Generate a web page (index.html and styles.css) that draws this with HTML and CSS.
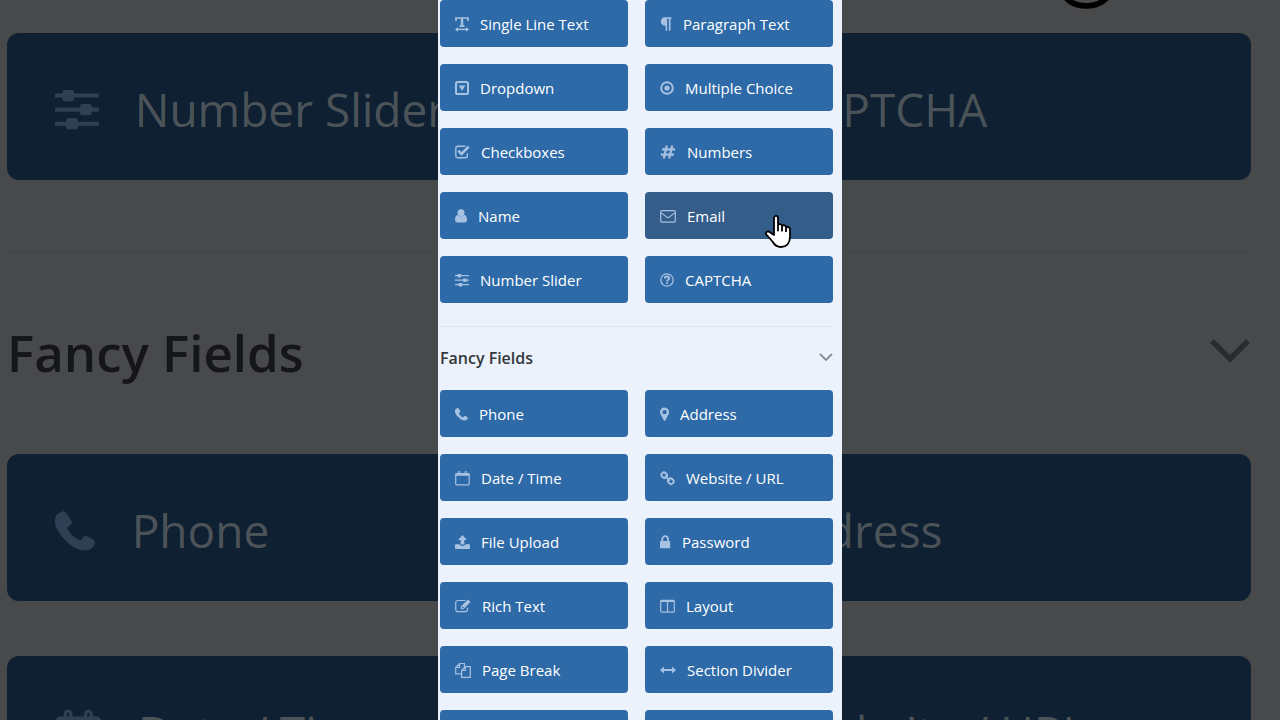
FILE: index.html
```html
<!DOCTYPE html>
<html lang="en">
<head>
  <meta charset="UTF-8" />
  <title>Form Fields</title>
  <link rel="stylesheet" href="styles.css">
</head>
<body>

  <!-- icon shapes, all 16 units tall -->
  <svg class="sprite" aria-hidden="true">
    <defs>
      <g id="text-width">
        <path class="line" stroke-width="1.7" d="M1 5V2h12v3M4.5 10.2h5" />
        <path class="line" stroke-width="2.4" d="M7 2v8.2" />
        <path class="line" stroke-width="1.5" d="M2 13.4h10" />
        <path d="M0 13.4l3-2.4v4.8zM14 13.4l-3-2.4v4.8z" />
      </g>
      <path id="paragraph" d="M11.5 1.3H5A4.2 4.2 0 0 0 5 9.7h.6v5h1.6V2.7h1.7v12h1.6v-12h1z" />
      <g id="caret-square">
        <rect class="line" stroke-width="2" x="1" y="2" width="12" height="12" rx="1.6" />
        <path d="M3.6 5.4h6.8L7 10.8z" />
      </g>
      <g id="dot-circle">
        <circle class="line" stroke-width="2" cx="7" cy="8" r="5.8" />
        <circle cx="7" cy="8" r="2.6" />
      </g>
      <g id="check-square">
        <path class="line" stroke-width="1.4" d="M10.4 2.3H2.8A2 2 0 0 0 .8 4.3v7.4a2 2 0 0 0 2 2h7.6a2 2 0 0 0 2-2V9.3" />
        <path class="line" stroke-width="2.6" d="M3.3 6.6L6.6 9.9l7-7.2" />
      </g>
      <path id="hashtag" class="line" stroke-width="2.2" d="M6.8 1.5L3.8 14.5M12.2 1.5L9.2 14.5M2 5.4h13.2M.8 10.6H14" />
      <g id="user">
        <circle cx="6" cy="4.7" r="3.5" />
        <path d="M2.6 6.8C.7 7.4 0 9.7 0 11.8c0 1.6.9 2.6 2.3 2.6h7.4c1.4 0 2.3-1 2.3-2.6 0-2.1-.7-4.4-2.6-5A4.6 4.6 0 0 1 6 8.6a4.6 4.6 0 0 1-3.4-1.8z" />
      </g>
      <g id="envelope">
        <rect class="line" stroke-width="1.2" x=".7" y="2.7" width="14.6" height="11.4" rx="1" />
        <path class="line" stroke-width="1.2" d="M1 4.6l5.4 4.3q1.6 1.2 3.2 0L15 4.6" />
      </g>
      <g id="sliders">
        <path class="line" stroke-width="1.3" d="M0 3.7h14M0 8.2h14M0 12.7h14" />
        <rect x="2.4" y="1.9" width="3.7" height="3.6" rx=".7" />
        <rect x="8" y="6.4" width="3.7" height="3.6" rx=".7" />
        <rect x="3.6" y="10.9" width="3.7" height="3.6" rx=".7" />
      </g>
      <g id="question-circle">
        <circle class="line" stroke-width="1.3" cx="7" cy="8" r="6.2" />
        <path class="line" stroke-width="1.8" d="M4.8 6.5c.1-1.4 1-2 2.2-2 1.3 0 2.2.7 2.2 1.8 0 1.5-2.1 1.5-2.1 3.1" />
        <rect x="6.2" y="10.3" width="1.8" height="1.7" />
      </g>
      <path id="phone" d="M2.9 2c-.4-.1-2.3.7-2.6 1.6-.9 2 .1 4.2 1.9 6.5 1.9 2.3 4.2 4.1 6.5 4.4 1.4.2 2.8-.3 3.5-1.1.5-.6.7-1.5.5-1.9-.2-.5-2.6-1.7-3-1.7-.6 0-1.2 1.5-1.7 1.5-.9 0-3.9-2.9-4-3.9 0-.5 1.4-1.2 1.4-1.8C5.4 5.1 3.5 2 2.9 2z" />
      <path id="map-marker" fill-rule="evenodd" d="M4.6 1.5C2 1.5 0 3.5 0 6c0 .8.2 1.5.5 2.1l3.2 6.2c.4.8 1.4.8 1.8 0l3.2-6.2c.3-.6.5-1.3.5-2.1 0-2.5-2-4.5-4.6-4.5zm0 2.4a2.2 2.2 0 1 1 0 4.4 2.2 2.2 0 0 1 0-4.4z" />
      <g id="calendar">
        <rect class="line" stroke-width="1.2" x=".7" y="3.6" width="13.5" height="11.2" rx="1" />
        <path d="M.7 3.5h13.5v2.3H.7z" />
        <rect class="line" stroke-width="1" x="3.3" y="1.3" width="1.8" height="3.5" rx=".9" />
        <rect class="line" stroke-width="1" x="9.8" y="1.3" width="1.8" height="3.5" rx=".9" />
      </g>
      <g id="link">
        <rect class="line" stroke-width="1.9" x="1.4" y="2.7" width="5.6" height="5" rx="2.2" transform="rotate(45 4.2 5.2)" />
        <rect class="line" stroke-width="1.9" x="8" y="8.7" width="5.6" height="5" rx="2.2" transform="rotate(45 10.8 11.2)" />
        <path class="line" stroke-width="1.7" d="M5 6l5 4.6" />
      </g>
      <g id="upload">
        <path d="M7.5 1L12 6H9.3v4.5H5.7V6H3z" />
        <path d="M1 10.2h3.5c.3 1.1 1.5 1.7 3 1.7s2.7-.6 3-1.7H14c.6 0 1 .4 1 1v2.7c0 .6-.4 1-1 1H1c-.6 0-1-.4-1-1v-2.7c0-.6.4-1 1-1z" />
      </g>
      <g id="lock">
        <path class="line" stroke-width="1.8" d="M2.3 8V5a2.8 2.8 0 0 1 5.6 0v3" />
        <rect x="0" y="7" width="10.2" height="7.3" rx=".8" />
      </g>
      <g id="pencil-square">
        <path class="line" stroke-width="1.2" d="M10.3 2.5H3A2.3 2.3 0 0 0 .7 4.8v6.6a2.3 2.3 0 0 0 2.3 2.3h7.2a2.3 2.3 0 0 0 2.3-2.3V9.8" />
        <path fill-rule="evenodd" d="M12.9 1.5l2.6 2.5-7 7.2H5.8V8.5zM7.1 9.1v1.1h1.2l.6-.7-1.2-1.1z" />
      </g>
      <g id="files">
        <path class="line" stroke-width="1.2" d="M6.6 11.9H.7V5.5l3.9-4h4.8v3.3M4.6 1.5v4H.7" />
        <path class="line" stroke-width="1.2" d="M6.6 8.5l3.7-3.8h5v10.6H6.6zM10.3 4.7v3.8H6.6" />
      </g>
      <g id="columns">
        <rect class="line" stroke-width="1.2" x=".7" y="2.4" width="13.6" height="11.8" rx="1" />
        <path d="M.7 2h13.6v2H.7z" />
        <path class="line" stroke-width="1.2" d="M7.5 3v11" />
      </g>
      <g id="arrows-h">
        <path class="line" stroke-width="2" d="M3 8h10" />
        <path d="M0 8l4-3.6v7.2zM16 8l-4-3.6v7.2z" />
      </g>
      <path id="chevron" class="line" stroke-width="1.8" d="M1 1l6 6 6-6" />
      <path id="hand" fill="#fff" stroke="#000" stroke-width="1.8" stroke-linejoin="round" d="M9 20V3.2C9 .2 13 .2 13 3.2V10c.7-1.4 4-1 4 1 .8-1.3 4-.8 4 1.2 1-.8 4-.2 4 2V22c0 6-3.3 10-9 10-4.5 0-6.6-2-8.5-5.5L1.3 19.5C0 17 3.3 15.6 5 17.2zM13 9.5v6.8M17 11v5.6M21 12.2v4.7" />
    </defs>
  </svg>

  <main class="stage">

    <!-- enlarged, dimmed copy of the fields behind the panel -->
    <div class="backdrop" aria-hidden="true" inert>
      <div class="fields">
        <button class="field" type="button"></button>
        <button class="field" type="button">
          <svg class="cursor" viewBox="0 0 26 33"><use href="#hand" /></svg>
        </button>
        <button class="field" type="button"><svg class="icon" viewBox="0 0 14 16"><use href="#sliders" /></svg>Number Slider</button>
        <button class="field" type="button"><svg class="icon" viewBox="0 0 14 16"><use href="#question-circle" /></svg>CAPTCHA</button>
      </div>
      <h2 class="group-title">Fancy Fields <svg class="chevron" viewBox="0 0 14 9"><use href="#chevron" /></svg></h2>
      <div class="fields">
        <button class="field" type="button"><svg class="icon" viewBox="0 0 13 16"><use href="#phone" /></svg>Phone</button>
        <button class="field" type="button"><svg class="icon" viewBox="0 0 9 16"><use href="#map-marker" /></svg>Address</button>
        <button class="field" type="button"><svg class="icon" viewBox="0 0 15 16"><use href="#calendar" /></svg>Date / Time</button>
        <button class="field" type="button"><svg class="icon" viewBox="0 0 15 16"><use href="#link" /></svg>Website / URL</button>
      </div>
    </div>

    <section class="panel">
      <div class="fields">
        <button class="field" type="button"><svg class="icon" viewBox="0 0 14 16"><use href="#text-width" /></svg>Single Line Text</button>
        <button class="field" type="button"><svg class="icon" viewBox="0 0 12 16"><use href="#paragraph" /></svg>Paragraph Text</button>
        <button class="field" type="button"><svg class="icon" viewBox="0 0 14 16"><use href="#caret-square" /></svg>Dropdown</button>
        <button class="field" type="button"><svg class="icon" viewBox="0 0 14 16"><use href="#dot-circle" /></svg>Multiple Choice</button>
        <button class="field" type="button"><svg class="icon" viewBox="0 0 15 16"><use href="#check-square" /></svg>Checkboxes</button>
        <button class="field" type="button"><svg class="icon" viewBox="0 0 16 16"><use href="#hashtag" /></svg>Numbers</button>
        <button class="field" type="button"><svg class="icon" viewBox="0 0 12 16"><use href="#user" /></svg>Name</button>
        <button class="field active" type="button"><svg class="icon" viewBox="0 0 16 16"><use href="#envelope" /></svg>Email
          <svg class="cursor" viewBox="0 0 26 33"><use href="#hand" /></svg>
        </button>
        <button class="field" type="button"><svg class="icon" viewBox="0 0 14 16"><use href="#sliders" /></svg>Number Slider</button>
        <button class="field" type="button"><svg class="icon" viewBox="0 0 14 16"><use href="#question-circle" /></svg>CAPTCHA</button>
      </div>

      <h2 class="group-title">Fancy Fields <svg class="chevron" viewBox="0 0 14 9"><use href="#chevron" /></svg></h2>

      <div class="fields">
        <button class="field" type="button"><svg class="icon" viewBox="0 0 13 16"><use href="#phone" /></svg>Phone</button>
        <button class="field" type="button"><svg class="icon" viewBox="0 0 9 16"><use href="#map-marker" /></svg>Address</button>
        <button class="field" type="button"><svg class="icon" viewBox="0 0 15 16"><use href="#calendar" /></svg>Date / Time</button>
        <button class="field" type="button"><svg class="icon" viewBox="0 0 15 16"><use href="#link" /></svg>Website / URL</button>
        <button class="field" type="button"><svg class="icon" viewBox="0 0 15 16"><use href="#upload" /></svg>File Upload</button>
        <button class="field" type="button"><svg class="icon" viewBox="0 0 11 16"><use href="#lock" /></svg>Password</button>
        <button class="field" type="button"><svg class="icon" viewBox="0 0 16 16"><use href="#pencil-square" /></svg>Rich Text</button>
        <button class="field" type="button"><svg class="icon" viewBox="0 0 15 16"><use href="#columns" /></svg>Layout</button>
        <button class="field" type="button"><svg class="icon" viewBox="0 0 16 16"><use href="#files" /></svg>Page Break</button>
        <button class="field" type="button"><svg class="icon" viewBox="0 0 16 16"><use href="#arrows-h" /></svg>Section Divider</button>
        <button class="field" type="button"></button>
        <button class="field" type="button"></button>
      </div>
    </section>

  </main>

</body>
</html>
```
FILE: styles.css
```css
* {
  box-sizing: border-box;
}

body {
  margin: 0;
  font-family: "Open Sans", "Noto Sans", sans-serif;
  background: #48494b;
}

.sprite {
  position: absolute;
  width: 0;
  height: 0;
}

.line {
  fill: none;
  stroke: currentColor;
}

.stage {
  position: relative;
  display: flex;
  justify-content: center;
  height: 100vh;
  overflow: hidden;
}

.panel {
  position: relative;
  width: 404px;
  max-width: 100%;
  padding: 0 9px 0 2px;
  background: #ebf2fb;
  overflow: hidden;
}

.fields {
  display: grid;
  grid-template-columns: 1fr 1fr;
  gap: 17px;
}

.field {
  position: relative;
  display: flex;
  align-items: center;
  gap: 11px;
  height: 47px;
  padding: 0 15px;
  border: none;
  border-radius: 4px;
  background: #2e6aa8;
  color: #fff;
  font-family: inherit;
  font-size: 15px;
  white-space: nowrap;
  cursor: pointer;
}

.field.active {
  background: #345d8a;
}

.icon {
  flex: none;
  height: 16px;
  color: #a6c1e2;
  fill: currentColor;
}

.cursor {
  position: absolute;
  left: 120px;
  top: 23px;
  z-index: 1;
  width: 26px;
  height: 33px;
}

.group-title {
  display: flex;
  align-items: center;
  justify-content: space-between;
  height: 64px;
  margin: 23px 0 0;
  padding-bottom: 2px;
  border-top: 1px solid #dde5ee;
  color: #33373c;
  font-size: 16px;
  font-weight: 600;
}

.chevron {
  width: 14px;
  height: 9px;
  color: #858c94;
}

/* dimmed background layer */
.backdrop {
  position: absolute;
  top: -169px;
  left: 0;
  right: 0;
  padding: 0 29px 0 7px;
}

.backdrop .fields {
  gap: 55px;
}

.backdrop .field {
  gap: 36px;
  height: 147px;
  padding: 4px 48px 0;
  border-radius: 12px;
  background: #0e2032;
  color: #4b5358;
  font-size: 46px;
}

.backdrop .icon {
  height: 50px;
  color: #304054;
}

.backdrop .cursor {
  left: 379px;
  top: 74px;
  width: 82px;
  height: 104px;
  filter: brightness(0.3);
}

.backdrop .group-title {
  height: 203px;
  margin-top: 71px;
  padding-bottom: 4px;
  border-top: 2px solid #43464b;
  color: #151618;
  font-size: 51px;
}

.backdrop .chevron {
  width: 42px;
  height: 27px;
  color: #292c2f;
}
```
